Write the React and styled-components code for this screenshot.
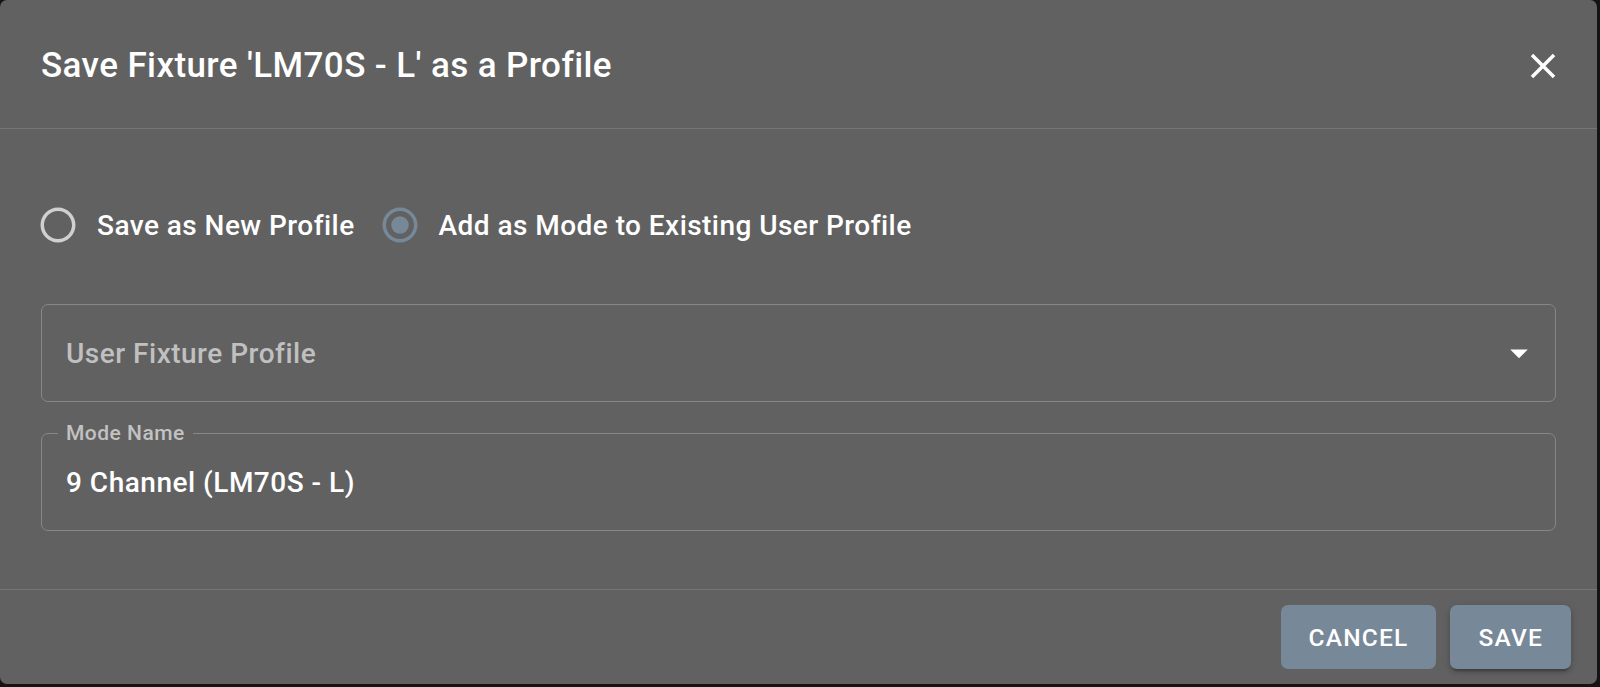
import React, { useState } from "react";
import styled, { createGlobalStyle } from "styled-components";

const GlobalStyle = createGlobalStyle`
  html, body {
    margin: 0;
    padding: 0;
    background: #141414;
    font-family: Roboto, "Liberation Sans", Arial, sans-serif;
  }
  * { box-sizing: border-box; }
`;

const Dialog = styled.div`
  width: 1597px;
  height: 684px;
  background: #616161;
  border-radius: 7px;
  display: flex;
  flex-direction: column;
  color: #ffffff;
  overflow: hidden;
`;

const Header = styled.div`
  height: 129px;
  flex: none;
  display: flex;
  align-items: center;
  justify-content: space-between;
  padding: 4px 33px 0 41px;
  border-bottom: 1px solid #767676;
`;

const Title = styled.h2`
  margin: 0;
  font-size: 35px;
  font-weight: 500;
  line-height: 1.6;
  letter-spacing: 0.4px;
`;

const CloseButton = styled.button`
  width: 42px;
  height: 42px;
  padding: 0;
  margin-top: -1px;
  border: none;
  background: transparent;
  color: #ffffff;
  display: flex;
  align-items: center;
  justify-content: center;
  cursor: pointer;
  svg { width: 42px; height: 42px; fill: currentColor; }
`;

const Content = styled.div`
  flex: 1;
  display: flex;
  flex-direction: column;
  padding: 75px 41px 0 41px;
`;

const RadioGroup = styled.div`
  display: flex;
  align-items: center;
  height: 42px;
`;

const Option = styled.label`
  display: flex;
  align-items: center;
  margin-left: -4px;
  margin-right: 28px;
  cursor: pointer;
  font-size: 28px;
  font-weight: 500;
  color: #ffffff;
  letter-spacing: 0.45px;
`;

const RadioIcon = styled.svg`
  width: 42px;
  height: 42px;
  margin-right: 18px;
  fill: ${(p) => (p.$checked ? "#778899" : "#d0d0d0")};
`;

const SelectBox = styled.div`
  margin-top: 58px;
  height: 98px;
  border: 1px solid #878787;
  border-radius: 7px;
  display: flex;
  align-items: center;
  justify-content: space-between;
  padding: 0 15px 0 24px;
  cursor: pointer;
`;

const Placeholder = styled.span`
  font-size: 28px;
  font-weight: 500;
  letter-spacing: 0.5px;
  color: #c0c0c0;
`;

const ArrowIcon = styled.svg`
  width: 42px;
  height: 42px;
  fill: #ffffff;
`;

const TextField = styled.div`
  position: relative;
  margin-top: 31px;
  height: 98px;
  border: 1px solid #878787;
  border-radius: 7px;
  display: flex;
  align-items: center;
  padding: 0 24px;
`;

const FloatingLabel = styled.span`
  position: absolute;
  top: -13px;
  left: 16px;
  padding: 0 8px 0 8px;
  background: #616161;
  font-size: 21px;
  line-height: 24px;
  font-weight: 500;
  letter-spacing: 0.5px;
  color: #c2c2c2;
`;

const Value = styled.span`
  font-size: 28px;
  font-weight: 500;
  letter-spacing: 0.5px;
  color: #ffffff;
`;

const Footer = styled.div`
  height: 95px;
  flex: none;
  border-top: 1px solid #767676;
  display: flex;
  align-items: center;
  justify-content: flex-end;
  gap: 14px;
  padding: 0 26px 0 0;
`;

const Button = styled.button`
  height: 64px;
  min-width: 112px;
  padding: 0 28px;
  border: none;
  border-radius: 7px;
  background: #778899;
  color: #ffffff;
  font-family: Roboto, "Liberation Sans", Arial, sans-serif;
  font-size: 24.5px;
  font-weight: 500;
  letter-spacing: 1.2px;
  text-transform: uppercase;
  cursor: pointer;
  box-shadow: ${(p) =>
    p.$raised
      ? "0 5px 2px -3px rgba(0,0,0,0.2), 0 3px 4px 0 rgba(0,0,0,0.14), 0 2px 9px 0 rgba(0,0,0,0.12)"
      : "none"};
`;

function Radio({ checked }) {
  return (
    <RadioIcon viewBox="0 0 24 24" $checked={checked}>
      <path d="M12 2C6.48 2 2 6.48 2 12s4.48 10 10 10 10-4.48 10-10S17.52 2 12 2zm0 18c-4.42 0-8-3.58-8-8s3.58-8 8-8 8 3.58 8 8-3.58 8-8 8z" />
      {checked && <circle cx="12" cy="12" r="5" />}
    </RadioIcon>
  );
}

export default function App() {
  const [mode, setMode] = useState("existing");
  return (
    <>
      <GlobalStyle />
      <Dialog>
        <Header>
          <Title>Save Fixture 'LM70S - L' as a Profile</Title>
          <CloseButton aria-label="close">
            <svg viewBox="0 0 24 24">
              <path d="M19 6.41 17.59 5 12 10.59 6.41 5 5 6.41 10.59 12 5 17.59 6.41 19 12 13.41 17.59 19 19 17.59 13.41 12z" />
            </svg>
          </CloseButton>
        </Header>
        <Content>
          <RadioGroup>
            <Option onClick={() => setMode("new")}>
              <Radio checked={mode === "new"} />
              Save as New Profile
            </Option>
            <Option onClick={() => setMode("existing")}>
              <Radio checked={mode === "existing"} />
              Add as Mode to Existing User Profile
            </Option>
          </RadioGroup>
          <SelectBox>
            <Placeholder>User Fixture Profile</Placeholder>
            <ArrowIcon viewBox="0 0 24 24">
              <path d="M7 10l5 5 5-5z" />
            </ArrowIcon>
          </SelectBox>
          <TextField>
            <FloatingLabel>Mode Name</FloatingLabel>
            <Value>9 Channel (LM70S - L)</Value>
          </TextField>
        </Content>
        <Footer>
          <Button>Cancel</Button>
          <Button $raised>Save</Button>
        </Footer>
      </Dialog>
    </>
  );
}
